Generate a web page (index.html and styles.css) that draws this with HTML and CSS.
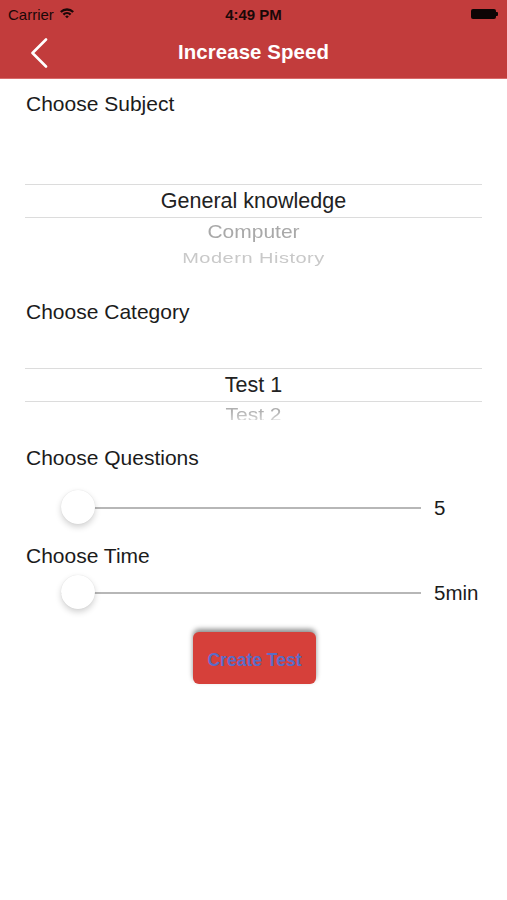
FILE: index.html
```html
<!DOCTYPE html>
<html>
<head>
<meta charset="utf-8">
<link rel="stylesheet" href="styles.css">
</head>
<body>
<div class="screen">
  <header class="header">
    <div class="status">
      <div class="status-left">
        <span class="carrier">Carrier</span>
        <svg class="wifi" width="16" height="12" viewBox="0 0 16 12">
          <path d="M1 4.2 A10 10 0 0 1 15 4.2 L13.4 5.8 A7.8 7.8 0 0 0 2.6 5.8 Z" fill="#1a0808"/>
          <path d="M3.6 6.8 A6.3 6.3 0 0 1 12.4 6.8 L10.8 8.4 A4 4 0 0 0 5.2 8.4 Z" fill="#1a0808"/>
          <path d="M6.2 9.4 A2.6 2.6 0 0 1 9.8 9.4 L8 11.3 Z" fill="#1a0808"/>
        </svg>
      </div>
      <span class="time">4:49 PM</span>
      <div class="battery"><span class="cell"></span><span class="nub"></span></div>
    </div>
    <div class="navbar">
      <svg class="back" width="20" height="30" viewBox="0 0 20 30">
        <polyline points="16,1.5 2.5,15 16,28.5" fill="none" stroke="#fff" stroke-width="2.6" stroke-linecap="round" stroke-linejoin="round"/>
      </svg>
      <h1 class="title">Increase Speed</h1>
    </div>
  </header>

  <main class="content">
    <div class="label label-subject">Choose Subject</div>
    <div class="picker picker-subject">
      <div class="row selected">General knowledge</div>
      <div class="row next">Computer</div>
      <div class="row far">Modern History</div>
    </div>

    <div class="label label-category">Choose Category</div>
    <div class="picker picker-category">
      <div class="row selected">Test 1</div>
      <div class="row next fade">Test 2</div>
    </div>

    <div class="label label-questions">Choose Questions</div>
    <div class="slider-row slider-q">
      <div class="track"><span class="thumb"></span></div>
      <span class="value">5</span>
    </div>

    <div class="label label-time">Choose Time</div>
    <div class="slider-row slider-t">
      <div class="track"><span class="thumb"></span></div>
      <span class="value">5min</span>
    </div>

    <div class="actions">
      <button class="create">Create Test</button>
    </div>
  </main>
</div>
</body>
</html>
```

FILE: styles.css
```css
* { box-sizing: border-box; }
html, body { margin: 0; padding: 0; background: #fff; }
body {
  font-family: "Liberation Sans", Arial, sans-serif;
  color: #1b1b1b;
  width: 507px;
  height: 900px;
  overflow: hidden;
}
.header {
  background: #c23c3c;
  height: 79px;
  border-bottom: 1px solid #d86a6a;
}
.status {
  height: 28px;
  display: flex;
  align-items: center;
  justify-content: space-between;
  padding: 0 9px 0 8px;
  position: relative;
}
.status-left { display: flex; align-items: center; gap: 5px; }
.carrier { font-size: 15px; color: #1a0808; }
.wifi { margin-top: -2px; }
.time {
  position: absolute;
  left: 0; right: 0;
  text-align: center;
  font-size: 15px;
  font-weight: bold;
  color: #1a0808;
}
.battery { display: flex; align-items: center; }
.cell {
  width: 25px; height: 10px;
  background: #0d0505;
  border-radius: 2px;
}
.nub {
  width: 2px; height: 4px;
  background: #0d0505;
  border-radius: 0 1px 1px 0;
}
.navbar {
  height: 50px;
  display: flex;
  align-items: center;
  justify-content: center;
  position: relative;
}
.back { position: absolute; left: 30px; top: 10px; }
.title {
  margin: 0;
  font-size: 20.4px;
  font-weight: bold;
  color: #fff;
  letter-spacing: 0.1px;
  margin-top: -2px;
}

.content { padding: 0 25px; }
.label {
  font-size: 21px;
  line-height: 24px;
  height: 24px;
  color: #1b1b1b;
  padding-left: 1px;
}
.label-subject { margin-top: 13px; }
.picker { overflow: hidden; text-align: center; }
.picker-subject { padding-top: 68px; height: 153px; }
.picker-category { padding-top: 44px; height: 96px; }
.row.selected {
  height: 34px;
  line-height: 32px;
  font-size: 21.5px;
  color: #222;
  border-top: 1px solid #dcdcdc;
  border-bottom: 1px solid #dcdcdc;
}
.row.next {
  height: 28px;
  line-height: 28px;
  font-size: 21px;
  color: #a9a9a9;
  transform: scaleY(0.9);
}
.row.far {
  height: 24px;
  line-height: 24px;
  font-size: 20px;
  color: #c9c9c9;
  transform: scaleY(0.74);
  letter-spacing: 0.5px;
}
.picker-category .row.next { color: #b0b0b0; line-height: 26px; }
.fade {
  -webkit-mask-image: linear-gradient(to bottom, #000 30%, rgba(0,0,0,0.15) 100%);
  mask-image: linear-gradient(to bottom, #000 30%, rgba(0,0,0,0.15) 100%);
}
.label-category { margin-top: 31px; }
.label-questions { margin-top: 26px; }
.label-time { margin-top: 18px; }

.slider-row {
  display: flex;
  align-items: center;
  height: 36px;
  padding-left: 36px;
}
.slider-q { margin-top: 20px; }
.slider-t { margin-top: 7px; }
.track {
  position: relative;
  width: 360px;
  height: 2px;
  background: #b7b7b7;
}
.thumb {
  position: absolute;
  left: 0;
  top: -17px;
  width: 34px;
  height: 34px;
  border-radius: 50%;
  background: #fff;
  box-shadow: 0 3px 6px rgba(0,0,0,0.18), 0 0 1px rgba(0,0,0,0.12);
}
.value {
  margin-left: 13px;
  font-size: 20.5px;
  color: #1b1b1b;
}

.actions {
  display: flex;
  justify-content: center;
  margin-top: 21px;
}
.create {
  width: 123px;
  height: 52px;
  border: none;
  border-radius: 6px;
  background: #d6403a;
  color: #5a6cc6;
  font-family: "Liberation Sans", Arial, sans-serif;
  font-size: 17.5px;
  font-weight: bold;
  box-shadow: 0 -3px 5px rgba(0,0,0,0.45);
  padding: 4px 0 0 0;
  margin-left: 2px;
}
```
